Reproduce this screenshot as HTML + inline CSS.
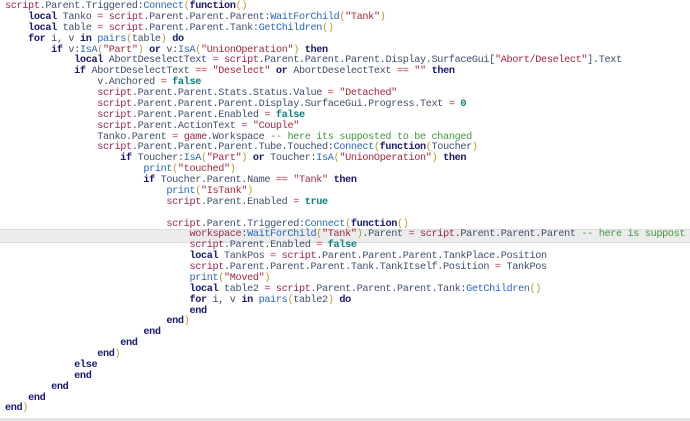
<!DOCTYPE html>
<html><head><meta charset="utf-8"><style>
html,body{margin:0;padding:0;background:#fff;width:690px;height:421px;overflow:hidden;position:relative}
pre{margin:0;position:absolute;left:5px;top:2px;font-family:"Liberation Mono",monospace;font-size:10.2px;letter-spacing:-0.35px;line-height:10.87px;color:#3f4d6e;white-space:pre}
.k{color:#161a70;font-weight:bold}
.s{color:#9c2450}
.f{color:#2766c4}
.t{color:#a8263a}
.b{color:#0a8080;font-weight:bold}
.o{color:#c0304a}
.c{color:#3e9a3e}
.y{color:#b89a20}
.hl{position:absolute;left:0;top:229px;width:690px;height:12px;background:#ececec;border-top:1px solid #dcdcdc;border-bottom:1px solid #dcdcdc}
.bot{position:absolute;left:0;top:418px;width:690px;height:3px;background:#e4e4e4}
</style></head><body>
<div class="hl"></div><div class="bot"></div>
<pre><span class="s">script</span>.Parent.Triggered:<span class="f">Connect</span><span class="y">(</span><span class="k">function</span><span class="y">()</span>
    <span class="k">local</span> Tanko <span class="o">=</span> <span class="s">script</span>.Parent.Parent.Parent:<span class="f">WaitForChild</span><span class="y">(</span><span class="t">"Tank"</span><span class="y">)</span>
    <span class="k">local</span> table <span class="o">=</span> <span class="s">script</span>.Parent.Parent.Tank:<span class="f">GetChildren</span><span class="y">()</span>
    <span class="k">for</span> i, v <span class="k">in</span> <span class="f">pairs</span><span class="y">(</span>table<span class="y">)</span> <span class="k">do</span>
        <span class="k">if</span> v:<span class="f">IsA</span><span class="y">(</span><span class="t">"Part"</span><span class="y">)</span> <span class="k">or</span> v:<span class="f">IsA</span><span class="y">(</span><span class="t">"UnionOperation"</span><span class="y">)</span> <span class="k">then</span>
            <span class="k">local</span> AbortDeselectText <span class="o">=</span> <span class="s">script</span>.Parent.Parent.Parent.Display.SurfaceGui[<span class="t">"Abort/Deselect"</span>].Text
            <span class="k">if</span> AbortDeselectText <span class="o">==</span> <span class="t">"Deselect"</span> <span class="k">or</span> AbortDeselectText <span class="o">==</span> <span class="t">""</span> <span class="k">then</span>
                v.Anchored <span class="o">=</span> <span class="b">false</span>
                <span class="s">script</span>.Parent.Parent.Stats.Status.Value <span class="o">=</span> <span class="t">"Detached"</span>
                <span class="s">script</span>.Parent.Parent.Parent.Display.SurfaceGui.Progress.Text <span class="o">=</span> <span class="b">0</span>
                <span class="s">script</span>.Parent.Parent.Enabled <span class="o">=</span> <span class="b">false</span>
                <span class="s">script</span>.Parent.ActionText <span class="o">=</span> <span class="t">"Couple"</span>
                Tanko.Parent <span class="o">=</span> <span class="s">game</span>.Workspace <span class="c">-- here its supposted to be changed</span>
                <span class="s">script</span>.Parent.Parent.Parent.Tube.Touched:<span class="f">Connect</span><span class="y">(</span><span class="k">function</span><span class="y">(</span>Toucher<span class="y">)</span>
                    <span class="k">if</span> Toucher:<span class="f">IsA</span><span class="y">(</span><span class="t">"Part"</span><span class="y">)</span> <span class="k">or</span> Toucher:<span class="f">IsA</span><span class="y">(</span><span class="t">"UnionOperation"</span><span class="y">)</span> <span class="k">then</span>
                        <span class="f">print</span><span class="y">(</span><span class="t">"touched"</span><span class="y">)</span>
                        <span class="k">if</span> Toucher.Parent.Name <span class="o">==</span> <span class="t">"Tank"</span> <span class="k">then</span>
                            <span class="f">print</span><span class="y">(</span><span class="t">"IsTank"</span><span class="y">)</span>
                            <span class="s">script</span>.Parent.Enabled <span class="o">=</span> <span class="b">true</span>

                            <span class="s">script</span>.Parent.Triggered:<span class="f">Connect</span><span class="y">(</span><span class="k">function</span><span class="y">()</span>
                                <span class="s">workspace</span>:<span class="f">WaitForChild</span><span class="y">(</span><span class="t">"Tank"</span><span class="y">)</span>.Parent <span class="o">=</span> <span class="s">script</span>.Parent.Parent.Parent <span class="c">-- here is suppost</span>
                                <span class="s">script</span>.Parent.Enabled <span class="o">=</span> <span class="b">false</span>
                                <span class="k">local</span> TankPos <span class="o">=</span> <span class="s">script</span>.Parent.Parent.Parent.TankPlace.Position
                                <span class="s">script</span>.Parent.Parent.Parent.Tank.TankItself.Position <span class="o">=</span> TankPos
                                <span class="f">print</span><span class="y">(</span><span class="t">"Moved"</span><span class="y">)</span>
                                <span class="k">local</span> table2 <span class="o">=</span> <span class="s">script</span>.Parent.Parent.Parent.Tank:<span class="f">GetChildren</span><span class="y">()</span>
                                <span class="k">for</span> i, v <span class="k">in</span> <span class="f">pairs</span><span class="y">(</span>table2<span class="y">)</span> <span class="k">do</span>
                                <span class="k">end</span>
                            <span class="k">end</span><span class="y">)</span>
                        <span class="k">end</span>
                    <span class="k">end</span>
                <span class="k">end</span><span class="y">)</span>
            <span class="k">else</span>
            <span class="k">end</span>
        <span class="k">end</span>
    <span class="k">end</span>
<span class="k">end</span><span class="y">)</span></pre>
</body></html>
